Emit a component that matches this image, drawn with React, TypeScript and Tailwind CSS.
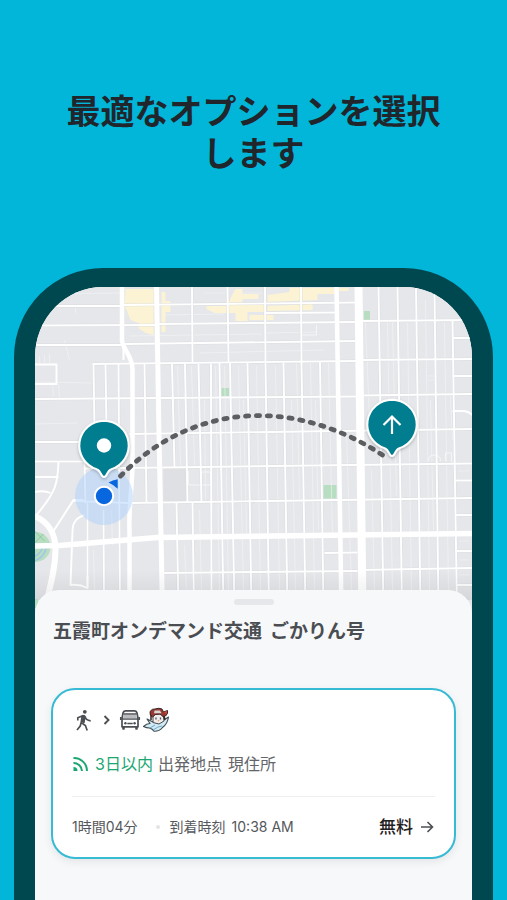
import React from "react";

const textFont = "font-['Inter','Noto_Sans_CJK_JP',sans-serif]";

const streets: number[][] = [
  [35, 306, 123, 306], [124, 305, 358, 302.5], [35, 325.5, 158, 325], [158, 324, 358, 322],
  [35, 345, 125, 345], [125, 344, 358, 341], [93, 364, 358, 361], [265, 313, 337, 312.5],
  [360, 321, 473, 320], [360, 360, 473, 359], [35, 399, 358, 396.5], [360, 395.5, 473, 394],
  [130, 434, 473, 429], [85, 468.5, 473, 463.5], [74, 501, 130, 503], [130, 503, 473, 498],
  [163, 573, 358, 571], [360, 570, 473, 568], [325, 553, 358, 552.5],
  [35, 442, 80, 442], [35, 461.5, 85, 461.5],
  [192.5, 287, 193, 362], [228, 287, 229, 362], [265.5, 287, 266, 362], [301.5, 287, 302, 362],
  [379, 287, 384, 610], [398, 287, 402.5, 610], [416.5, 287, 421, 610], [435, 290, 439, 610], [453, 320, 457.5, 610],
  [94, 364, 95, 430], [106, 364, 107, 430], [119, 364, 120.5, 610], [145, 364, 147, 503],
  [172.5, 364, 175, 468], [177, 503, 179, 610], [185.5, 364, 188, 503], [193, 503, 194.5, 610], [199, 364, 202, 503], [211.5, 364, 212, 610],
  [220, 363, 224, 610], [230.5, 363, 235, 610], [248, 363, 252, 610], [266, 363, 269.5, 610],
  [284, 363, 288, 610], [302, 362, 306, 610], [320.5, 362, 324, 610],
  [85, 462, 86, 503], [88, 503, 88, 588], [104, 510, 104.5, 610],
  [453, 338, 473, 338], [453, 376, 473, 376], [455, 480.5, 473, 480.5], [456, 515, 473, 515],
  [457, 551, 473, 551], [457, 585, 473, 585],
];

const alleys: number[][] = [
  [35, 294, 120, 293], [130, 336, 262, 334], [162, 315, 225, 314], [200, 353, 325, 350], [267, 333, 317, 332],
  [35, 382, 92, 383], [35, 424, 78, 423], [65, 340, 70, 360], [76, 306, 76, 313], [205, 293, 226, 293],
  [40, 356, 40, 363], [45, 355, 45, 363], [50, 354, 50, 363], [53, 384, 54, 396], [59, 384, 60, 398],
  [178, 366, 181, 466], [192, 366, 195, 466], [205, 400, 206, 500], [216, 366, 220, 590],
  [225, 366, 229, 590], [239, 366, 244, 590], [244, 400, 247, 533], [257, 366, 261, 590], [276, 366, 280, 590],
  [292, 400, 296, 590], [297, 363, 300, 500], [311, 363, 315, 590], [316, 400, 319, 530], [329, 363, 333, 534],
  [347, 433, 352, 590], [366, 323, 370, 420], [372, 470, 375, 590], [388, 322, 393, 590], [393, 322, 397, 496],
  [408, 323, 412, 590], [426, 300, 430, 590], [431, 400, 434, 530], [445, 323, 449, 590], [451, 396, 453, 440],
  [459, 471, 470, 471], [460, 541, 470, 541], [460, 560, 470, 560], [460, 575, 470, 575], [428, 380, 436, 380], [428, 376, 436, 376],
  [185, 545, 187, 590], [200, 510, 202, 590], [94, 550, 95, 590], [112, 510, 113, 545], [240, 293, 262, 293],
];

function Pin({ x, y, children }: { x: number; y: number; children: React.ReactNode }) {
  return (
    <g transform={`translate(${x} ${y})`}>
      <path
        d="M0 -24.800A24.800 24.800 0 0 1 7.500 23.600C4.500 24.600 3.900 26.200 2.400 29.600Q0 33.400 -2.400 29.600C-3.900 26.200 -4.500 24.600 -7.500 23.600A24.800 24.800 0 0 1 0 -24.800Z"
        fill="#027d8e"
        stroke="#fff"
        strokeWidth="2"
        filter="url(#pinShadow)"
      />
      {children}
    </g>
  );
}

function RouteMap() {
  return (
    <svg
      className="block h-[325px] w-full"
      viewBox="35 287 438 325"
      preserveAspectRatio="xMidYMin slice"
      role="img"
      aria-label="ルートの地図"
    >
      <defs>
        <filter id="pinShadow" x="-30%" y="-30%" width="160%" height="160%">
          <feDropShadow dx="0" dy="1.5" stdDeviation="1.5" floodColor="#000" floodOpacity="0.25" />
        </filter>
        <linearGradient id="sheetShade" x1="0" x2="0" y1="0" y2="1">
          <stop offset="0" stopColor="#000" stopOpacity="0" />
          <stop offset="1" stopColor="#000" stopOpacity="0.07" />
        </linearGradient>
      </defs>
      <rect x="35" y="287" width="438" height="325" fill="#e6e7ea" />
      <path d="M164 469h24v33h-24z" fill="#dfe0e3" />

      <g fill="#fbf3d3">
        <path d="M126 289h28v46l-8-2-7-5v-5l-8-3-4-10-2-4z" />
        <path d="M162 292h4v9h5v11h-5v20h-4z" />
        <path d="M207 306h20v-5h10v4h28v7h-17v9h-12v-8h-21l-8-4z" />
        <path d="M231 298l5-9h7v5h16v5h-16v4h-13z" />
        <path d="M268 295l22-3v-4h45v6h-17v6l-50 2z" />
        <path d="M268 306l45-2v6l-45 1z" />
        <path d="M250 315h24v5h-24z" />
        <path d="M339 288h10v3h-10z" />
      </g>
      <g fill="#b8dec2">
        <path d="M222 388h7.500v8H222z" />
        <path d="M364.500 311h6v9h-6z" />
        <path d="M324 485h13v13.500h-13z" />
        <circle cx="36" cy="547" r="15" />
        <path d="M35 600c4-3 5 3 3 8h-3z" />
      </g>
      <path d="M35 556c6-1 8-8 10-12M35 561c8-3 11-9 12-14" fill="none" stroke="#a2c6e6" strokeWidth="1.5" />
      <path d="M35 531l10 10M35 543l9-9" fill="none" stroke="#8cc79d" strokeWidth="1" />

      <g stroke="#f5f6f7" strokeWidth="0.8" opacity="0.7">
        {alleys.map(([x1, y1, x2, y2], i) => (
          <line key={i} x1={x1} y1={y1} x2={x2} y2={y2} />
        ))}
      </g>
      <g stroke="#d6d8dc" strokeWidth="3" opacity="0.6">
        {streets.map(([x1, y1, x2, y2], i) => (
          <line key={i} x1={x1} y1={y1} x2={x2} y2={y2} />
        ))}
      </g>
      <g stroke="#fff" strokeWidth="1.9">
        {streets.map(([x1, y1, x2, y2], i) => (
          <line key={i} x1={x1} y1={y1} x2={x2} y2={y2} />
        ))}
      </g>
      <g fill="none" stroke="#fff" strokeWidth="1.9" strokeLinejoin="round">
        <path d="M35 364.500h22v19.500H35" />
        <path d="M59 462c-1 20-1 28-22 53M35 477h24M35 492q10-2 16 1" />
        <path d="M84 500h-10l-20 31" strokeWidth="2" />
        <path d="M85 515c-9 3-12 8-12 16l-2 54q9-1 17 3v-12" />
        <path d="M453 411h12q5 1 8 4" />
        <path d="M189 471v14h22v-13h-9v2" strokeWidth="1" opacity="0.6" />
        <path d="M429 461q0-6 6-6t6 6M446 461v-8h6v9" strokeWidth="1" opacity="0.6" />
        <path d="M302 335h15v-10" strokeWidth="1" opacity="0.6" />
      </g>
      <g fill="none" stroke="#fff">
        <path d="M122.500 287v54c2 10 10 15 10.500 28v98c-1 30-4 40-3 65v80" strokeWidth="4.500" />
        <path d="M124 344v16" strokeWidth="2" />
        <path d="M157 287l2 120 4 205" strokeWidth="5" />
        <path d="M337 287l5 325" strokeWidth="4.500" />
        <path d="M359 287l4 325" strokeWidth="8" />
        <path d="M35 546l25-.5 98-8 315-4" strokeWidth="5.500" />
        <path d="M35 516c14 6 21 18 21 33s-3 28-10 58" strokeWidth="6" />
      </g>
      <rect x="35" y="570" width="438" height="30" fill="url(#sheetShade)" />

      <circle cx="104.500" cy="496" r="29" fill="#add2fb" opacity="0.5" />
      <path
        d="M121 476C197 399 300 399 386 457"
        fill="none"
        stroke="#5d5e61"
        strokeWidth="4.800"
        strokeLinecap="round"
        strokeDasharray="3.200 7.700"
      />
      <path d="M109 482.500q4-2.500 9.200-3.200v9.500q-4-4-9.200-6.300z" fill="#0866df" />
      <circle cx="104.500" cy="496" r="9.200" fill="#0866df" stroke="#fff" strokeWidth="2" />
      <Pin x={104.5} y={445.5}>
        <circle r="7.200" fill="#fff" />
      </Pin>
      <Pin x={392.5} y={424.5}>
        <path d="M0 9.500V-8M-8.500 .5L0 -8L8.500 .5" fill="none" stroke="#fff" strokeWidth="2.200" />
      </Pin>
    </svg>
  );
}

function WalkIcon() {
  return (
    <svg className="h-6 w-6" viewBox="0 0 24 24" fill="none" stroke="#4c4f54" strokeWidth="1.7" aria-hidden="true">
      <circle cx="12.800" cy="3.800" r="1.900" fill="#4c4f54" stroke="none" />
      <path d="M5.800 12.500V9.800l4.900-2.100 2 .4 1.600 3.100c1.200 1 2.400 1.600 4.400 1.700" strokeLinejoin="round" />
      <path d="M10.200 8l-1 6.500 4.200 3 1.800 5M9.200 14.500l-1 3.500-3.200 4M12.800 9l-1 5.800" />
      <path d="M10 7.500h3l-1.200 7H9.500z" fill="#4c4f54" stroke="none" />
    </svg>
  );
}

function BusIcon() {
  return (
    <svg className="h-6 w-6" viewBox="0 0 24 24" fill="none" stroke="#4c4f54" strokeWidth="1.700" aria-hidden="true">
      <path d="M4 10.500l1-5.500q.4-2 2.400-2.200h9.200q2 .2 2.400 2.200l1 5.500v8.300H4z" strokeLinejoin="round" />
      <path d="M5.500 6h13M4 11h16M2.800 9v3M21.200 9v3M9.300 15.500h5.400" />
      <path d="M4.200 18.500h2.600v2.700q-1.300 1-2.600 0zM17.200 18.500h2.600v2.700q-1.300 1-2.600 0z" fill="#4c4f54" stroke="none" />
      <circle cx="7.400" cy="15.300" r="1.200" fill="#4c4f54" stroke="none" />
      <circle cx="16.600" cy="15.300" r="1.200" fill="#4c4f54" stroke="none" />
      <path d="M5.700 7h12.600l.6 3.300H5.100z" fill="#b9bbbe" stroke="none" />
    </svg>
  );
}

function MascotIcon() {
  return (
    <svg className="h-[26px] w-7" viewBox="0 0 28 26" strokeLinejoin="round" aria-hidden="true">
      <path
        d="M1.500 19.500q3-3 6.500-3l-3-4.500 6 3 2-2 7 1 6.500-4q-1 7-6 10.500-3 4-8.500 3.800-1.500-2.500-4.500-3.300-3 0-6-1.500z"
        fill="#cfeaf5"
        stroke="#404a50"
        strokeWidth="1.100"
      />
      <path d="M11 7h10l1 7-5 3-6-1.500z" fill="#efeeec" stroke="#4d4a4a" strokeWidth="1" />
      <path
        d="M8 4.500Q10 1.500 13 2q4-1.500 7 0l1.500 3 4-1.500q1 3-2 5.500l-2.500.5-3-2.500-4.500.5-3 2.500q-3-1-2.500-5.500z"
        fill="#983a32"
        stroke="#392628"
        strokeWidth="1"
      />
      <path d="M12.500 3.500h5.500l1.500 2.700h-7.500z" fill="#dcd6d3" />
      <path d="M22 5l3-1-.5 3z" fill="#e34532" />
      <path d="M9 8v5M22 9l1 4" stroke="#392628" strokeWidth="1.500" />
      <path d="M14 10.500v2M18.500 10.500v2" stroke="#55565b" strokeWidth="1.300" />
      <path d="M15.500 13l2 .2-1 1.500z" fill="#d8a070" />
      <path d="M8 21l5-3M11 23l5-3 4-1" stroke="#6fa9c5" strokeWidth="1" fill="none" />
    </svg>
  );
}

function LiveIcon() {
  return (
    <svg className="h-4 w-4" viewBox="0 0 16 16" fill="none" stroke="#1ba672" strokeWidth="2" aria-hidden="true">
      <path d="M1.500 2A13 13 0 0 1 15 15M1.500 7A8.300 8.300 0 0 1 10 15" />
      <path d="M1.500 11A4 4 0 0 1 5.500 15h-4z" fill="#1ba672" stroke="none" />
    </svg>
  );
}

function RideOption() {
  return (
    <button
      type="button"
      className="mx-4 flex flex-col rounded-3xl border-2 border-[#37bad3] bg-white px-[19px] pt-4 text-left shadow-[0_3px_8px_rgba(0,0,0,0.08)]"
    >
      <span className="flex h-7 items-center">
        <WalkIcon />
        <svg className="h-5 w-5" viewBox="0 0 20 20" fill="none" stroke="#4c4f54" strokeWidth="1.900" aria-hidden="true">
          <path d="M8.500 6l4 4-4 4" />
        </svg>
        <span className="pl-0.5">
          <BusIcon />
        </span>
        <MascotIcon />
      </span>
      <span className="mt-4 flex h-7 items-center text-base text-[#636568]">
        <LiveIcon />
        <span className="ml-[7px] text-[#1ba672]">3日以内</span>
        <span className="ml-[5px] flex gap-1.5">
          <span>出発地点</span>
          <span>現住所</span>
        </span>
      </span>
      <span className="mt-[18px] flex h-[61px] items-center border-t border-[#eeeff1] text-sm text-[#55585c]">
        <span>1時間04分</span>
        <span className="ml-[18px] h-1 w-1 rounded-full bg-[#e3e4e6]" />
        <span className="ml-2.5 flex gap-1.5">
          <span>到着時刻</span>
          <span>10:38 AM</span>
        </span>
        <span className="ml-auto text-[17px] font-medium text-[#1f2022]">無料</span>
        <svg className="ml-1.5 h-4 w-4" viewBox="0 0 16 16" fill="none" stroke="#4c4f54" strokeWidth="1.600" aria-hidden="true">
          <path d="M2 8h11.500M8.500 3l5 5-5 5" />
        </svg>
      </span>
    </button>
  );
}

export default function App() {
  return (
    <main className={`flex min-h-screen flex-col bg-[#02b6d9] ${textFont}`}>
      <h1 className="mx-auto w-full max-w-[400px] px-3 pt-[91px] text-center text-[34px] leading-[42px] font-bold text-[#20262b]">
        最適なオプションを選択します
      </h1>
      <div className="mx-3.5 mt-[93px] flex flex-1 flex-col overflow-hidden rounded-t-[89px] border-x-[21px] border-t-[19px] border-[#004850] bg-[#f7f8fa]">
        <RouteMap />
        <section className="relative -mt-[22px] flex flex-1 flex-col rounded-t-3xl bg-[#f7f8fa] pb-10">
          <div className="mx-auto mt-[9px] h-1.5 w-10 rounded-full bg-[#e6e7ea]" />
          <h2 className="mt-[13px] mb-[42px] flex flex-wrap gap-x-2 px-[18px] text-[19px] leading-7 font-bold text-[#4a4d52]">
            <span>五霞町オンデマンド交通</span>
            <span>ごかりん号</span>
          </h2>
          <RideOption />
        </section>
      </div>
    </main>
  );
}
